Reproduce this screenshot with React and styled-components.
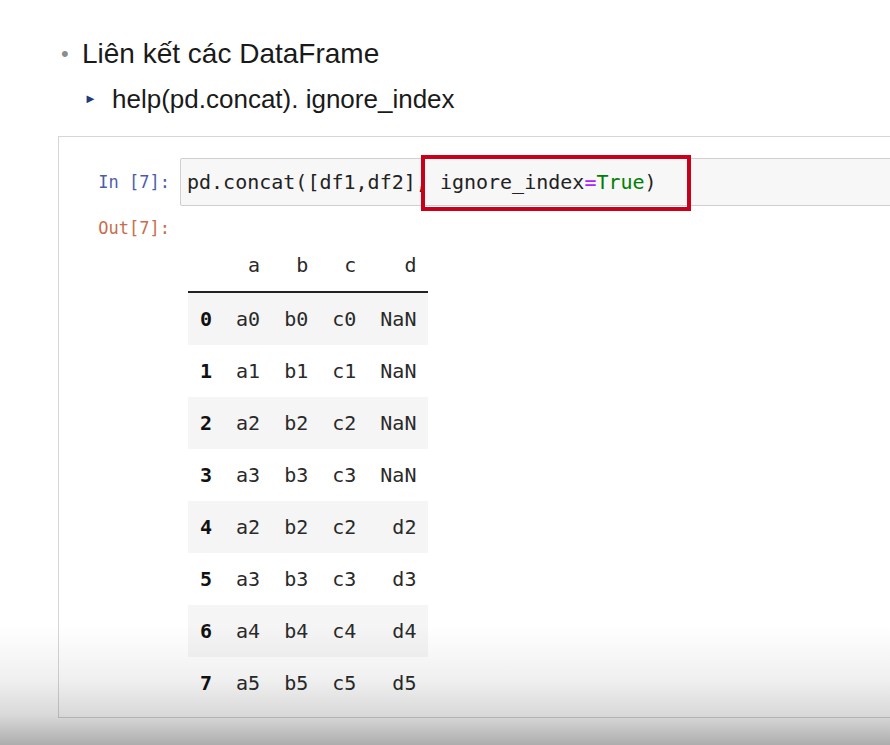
import React from 'react'
import styled, { createGlobalStyle } from 'styled-components'

const GlobalStyle = createGlobalStyle`
  html, body {
    margin: 0;
    padding: 0;
    background: #fff;
    overflow: hidden;
  }
  body {
    font-family: "Liberation Sans", Arial, sans-serif;
    color: #222;
  }
`

const Page = styled.div`
  width: 890px;
  height: 745px;
  position: relative;
  overflow: hidden;
  padding-top: 36px;
  box-sizing: border-box;
`

const Heading = styled.div`
  display: flex;
  align-items: center;
  padding-left: 61px;
  font-size: 28px;
  line-height: 36px;
  color: #1a1a1a;
`

const Dot = styled.span`
  color: #8c8c8c;
  font-size: 22px;
  width: 21px;
`

const SubHeading = styled.div`
  display: flex;
  align-items: center;
  margin-top: 10px;
  padding-left: 84px;
  font-size: 26px;
  line-height: 34px;
  color: #1a1a1a;
`

const Arrow = styled.span`
  color: #1f3b7a;
  font-size: 13px;
  width: 28px;
`

const Cell = styled.div`
  margin: 20px 0 0 58px;
  width: 1000px;
  height: 582px;
  box-sizing: border-box;
  border: 1px solid #d6d6d6;
  padding-top: 21px;
  font-family: "DejaVu Sans Mono", "Liberation Mono", monospace;
`

const Row = styled.div`
  display: flex;
  align-items: ${p => (p.$top ? 'flex-start' : 'center')};
`

const Prompt = styled.div`
  width: 111px;
  flex: none;
  text-align: right;
  font-size: 17px;
  line-height: 24px;
  color: ${p => p.$color};
  margin-right: 10px;
  opacity: 0.85;
`

const InputArea = styled.div`
  flex: 1;
  height: 48px;
  box-sizing: border-box;
  background: #f7f7f7;
  border: 1px solid #cfcfcf;
  border-radius: 2px;
  display: flex;
  align-items: center;
  padding-left: 6px;
  font-size: 20px;
  line-height: 24px;
  color: #222;
  white-space: pre;
`

const Highlight = styled.span`
  position: relative;
  &::after {
    content: '';
    position: absolute;
    top: -15px;
    bottom: -17px;
    left: -19px;
    right: -34px;
    border: 4px solid #c8001c;
  }
`

const Op = styled.span`
  color: #aa22ff;
`

const Kw = styled.span`
  color: #008000;
`

const Output = styled.div`
  margin-top: 10px;
`

const Table = styled.table`
  border-collapse: collapse;
  margin-top: 23px;
  margin-left: 8px;
  font-size: 20px;
  color: #2a2a2a;
`

const Th = styled.th`
  height: 52px;
  padding: 0 12px;
  text-align: right;
  font-weight: normal;
  vertical-align: middle;
  border-bottom: 2px solid #222;
`

const Tr = styled.tr`
  background: ${p => (p.$odd ? '#fff' : '#f5f5f5')};
`

const Td = styled.td`
  height: 52px;
  padding: 0 12px;
  text-align: right;
  vertical-align: middle;
  font-weight: ${p => (p.$index ? 'bold' : 'normal')};
  color: ${p => (p.$index ? '#111' : '#2a2a2a')};
`

const Shade = styled.div`
  position: absolute;
  left: 0;
  right: 0;
  bottom: 0;
  height: 120px;
  pointer-events: none;
  background: linear-gradient(
    to bottom,
    rgba(0, 0, 0, 0) 0%,
    rgba(0, 0, 0, 0.06) 45%,
    rgba(0, 0, 0, 0.15) 75%,
    rgba(0, 0, 0, 0.32) 100%
  );
`

const rows = [
  ['0', 'a0', 'b0', 'c0', 'NaN'],
  ['1', 'a1', 'b1', 'c1', 'NaN'],
  ['2', 'a2', 'b2', 'c2', 'NaN'],
  ['3', 'a3', 'b3', 'c3', 'NaN'],
  ['4', 'a2', 'b2', 'c2', 'd2'],
  ['5', 'a3', 'b3', 'c3', 'd3'],
  ['6', 'a4', 'b4', 'c4', 'd4'],
  ['7', 'a5', 'b5', 'c5', 'd5'],
]

export default function App() {
  return (
    <Page>
      <GlobalStyle />
      <Heading>
        <Dot>•</Dot>Liên kết các DataFrame
      </Heading>
      <SubHeading>
        <Arrow>►</Arrow>help(pd.concat). ignore_index
      </SubHeading>

      <Cell>
        <Row>
          <Prompt $color="#303f9f">In [7]:</Prompt>
          <InputArea>
            pd.concat([df1,df2], <Highlight>ignore_index<Op>=</Op><Kw>True</Kw>)</Highlight>
          </InputArea>
        </Row>
        <Output>
          <Row $top>
            <Prompt $color="#c0532c">Out[7]:</Prompt>
            <Table>
              <thead>
                <tr>
                  <Th></Th>
                  <Th>a</Th>
                  <Th>b</Th>
                  <Th>c</Th>
                  <Th>d</Th>
                </tr>
              </thead>
              <tbody>
                {rows.map((r, i) => (
                  <Tr key={r[0]} $odd={i % 2 === 1}>
                    {r.map((v, j) => (
                      <Td key={j} $index={j === 0}>{v}</Td>
                    ))}
                  </Tr>
                ))}
              </tbody>
            </Table>
          </Row>
        </Output>
      </Cell>
      <Shade />
    </Page>
  )
}
